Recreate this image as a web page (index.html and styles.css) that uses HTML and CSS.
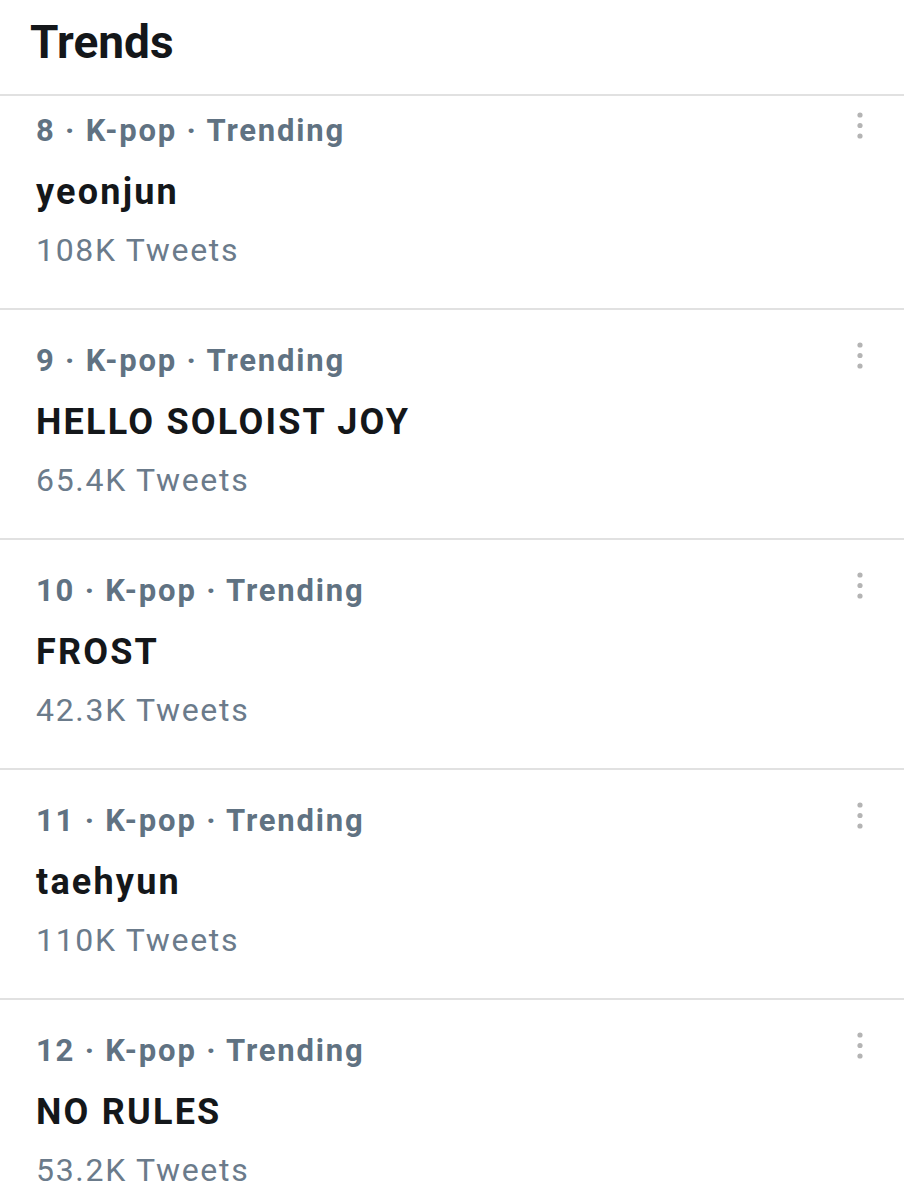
FILE: index.html
```html
<!DOCTYPE html>
<html lang="en">
<head>
    <meta charset="UTF-8">
    <meta name="viewport" content="width=device-width, initial-scale=1.0">
    <title>Trends</title>

    <link rel="stylesheet" href="styles.css">
</head>
<body>

    <header class="page-header">Trends</header>

    <ul class="trend-list">
        <li class="trend first">
            <div class="trend-info">
                <div class="trend-meta">8 · K-pop · Trending</div>
                <div class="trend-name">yeonjun</div>
                <div class="trend-count">108K Tweets</div>
            </div>
            <svg class="more" width="10" height="28" viewBox="0 0 10 28"><circle cx="5" cy="3" r="2.6"/><circle cx="5" cy="13.5" r="2.6"/><circle cx="5" cy="24" r="2.6"/></svg>
        </li>
        <li class="trend">
            <div class="trend-info">
                <div class="trend-meta">9 · K-pop · Trending</div>
                <div class="trend-name">HELLO SOLOIST JOY</div>
                <div class="trend-count">65.4K Tweets</div>
            </div>
            <svg class="more" width="10" height="28" viewBox="0 0 10 28"><circle cx="5" cy="3" r="2.6"/><circle cx="5" cy="13.5" r="2.6"/><circle cx="5" cy="24" r="2.6"/></svg>
        </li>
        <li class="trend">
            <div class="trend-info">
                <div class="trend-meta">10 · K-pop · Trending</div>
                <div class="trend-name">FROST</div>
                <div class="trend-count">42.3K Tweets</div>
            </div>
            <svg class="more" width="10" height="28" viewBox="0 0 10 28"><circle cx="5" cy="3" r="2.6"/><circle cx="5" cy="13.5" r="2.6"/><circle cx="5" cy="24" r="2.6"/></svg>
        </li>
        <li class="trend">
            <div class="trend-info">
                <div class="trend-meta">11 · K-pop · Trending</div>
                <div class="trend-name">taehyun</div>
                <div class="trend-count">110K Tweets</div>
            </div>
            <svg class="more" width="10" height="28" viewBox="0 0 10 28"><circle cx="5" cy="3" r="2.6"/><circle cx="5" cy="13.5" r="2.6"/><circle cx="5" cy="24" r="2.6"/></svg>
        </li>
        <li class="trend">
            <div class="trend-info">
                <div class="trend-meta">12 · K-pop · Trending</div>
                <div class="trend-name">NO RULES</div>
                <div class="trend-count">53.2K Tweets</div>
            </div>
            <svg class="more" width="10" height="28" viewBox="0 0 10 28"><circle cx="5" cy="3" r="2.6"/><circle cx="5" cy="13.5" r="2.6"/><circle cx="5" cy="24" r="2.6"/></svg>
        </li>
    </ul>

</body>
</html>
```

FILE: styles.css
```css
/* General Styles */
body {
    font-family: Roboto, "Liberation Sans", sans-serif;
    background-color: #ffffff;
    color: #14171a;
    margin: 0;
    padding: 0;
}

.page-header {
    font-size: 46px;
    font-weight: bold;
    line-height: 56px;
    padding: 14px 30px 24px;
    border-bottom: 2px solid #e1e1e1;
}

/* Trend rows */
.trend-list {
    list-style: none;
    margin: 0;
    padding: 0;
}

.trend {
    display: flex;
    justify-content: space-between;
    align-items: flex-start;
    padding: 31px 39px 38px 36px;
    border-bottom: 2px solid #e1e1e1;
}

.trend.first {
    padding-top: 15px;
    padding-bottom: 38px;
}

.trend-meta {
    font-size: 31px;
    font-weight: bold;
    line-height: 40px;
    letter-spacing: 1.8px;
    color: #607282;
}

.trend-name {
    font-size: 36px;
    font-weight: bold;
    line-height: 46px;
    letter-spacing: 2.2px;
    margin-top: 18px;
}

.trend-count {
    font-size: 32px;
    line-height: 40px;
    letter-spacing: 1.7px;
    margin-top: 15px;
    color: #6b7b8b;
}

.more {
    fill: #b4b4b4;
    margin-top: 1px;
}
```
